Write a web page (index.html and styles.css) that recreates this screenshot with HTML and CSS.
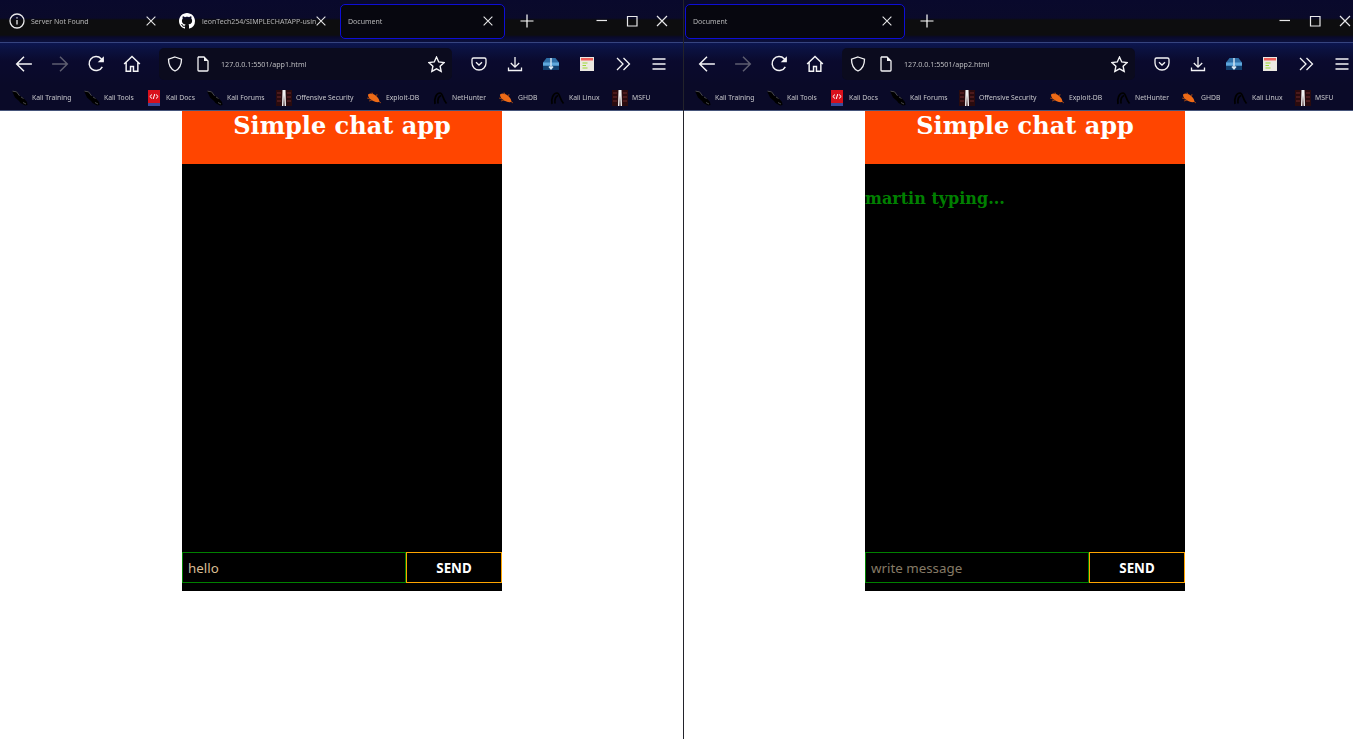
FILE: index.html
```html
<!DOCTYPE html>
<html lang="en">
<head>
    <meta charset="UTF-8">
    <meta name="viewport" content="width=device-width, initial-scale=1.0">
    <title>Simple chat app</title>
    <link rel="stylesheet" href="styles.css">
</head>
<body>

<!-- shared icons -->
<svg class="sprite" width="0" height="0">
  <symbol id="i-close" viewBox="0 0 16 16"><path d="M3 3l10 10M13 3L3 13"/></symbol>
  <symbol id="i-plus" viewBox="0 0 16 16"><path d="M8 1.500v13M1.500 8h13"/></symbol>
  <symbol id="i-min" viewBox="0 0 16 16"><path d="M2.500 7.500h10.500"/></symbol>
  <symbol id="i-max" viewBox="0 0 16 16"><path d="M3.500 3.500h9.500v9.500h-9.500z"/></symbol>
  <symbol id="i-info" viewBox="0 0 16 16"><circle cx="8" cy="8" r="7"/><path d="M8 7v4.500M8 4.200v1.300"/></symbol>
  <symbol id="i-back" viewBox="0 0 16 16"><path d="M15 8H1.500M8 1.500L1.500 8 8 14.500"/></symbol>
  <symbol id="i-forward" viewBox="0 0 16 16"><path d="M1 8h13.500M8 1.500L14.500 8 8 14.500"/></symbol>
  <symbol id="i-reload" viewBox="0 0 16 16"><path d="M13.600 10.500A6.200 6.200 0 1 1 12.600 3.300L14.500 5"/><path class="fill" d="M15 1v5.500H9.500z"/></symbol>
  <symbol id="i-home" viewBox="0 0 16 16"><path d="M1 8l7-6.700L15 8M2.800 6.500v8h3.900v-4.300h2.600v4.300h3.900v-8"/></symbol>
  <symbol id="i-shield" viewBox="0 0 16 16"><path d="M8 1l6.500 2.200c0 6-1.500 9.500-6.500 11.800C3 12.700 1.500 9.200 1.500 3.200z"/></symbol>
  <symbol id="i-page" viewBox="0 0 16 16"><path d="M3 1h6l4 4v9.200a.8.8 0 0 1-.8.800H3.800a.8.8 0 0 1-.8-.8V1.800A.8.8 0 0 1 3.800 1z"/><path class="fill" d="M9 1l4 4H9z"/></symbol>
  <symbol id="i-star" viewBox="0 0 16 16"><path d="M8 1l2.100 4.600 5 .6-3.700 3.400 1 4.900L8 12.100l-4.400 2.400 1-4.900L.9 6.200l5-.6z"/></symbol>
  <symbol id="i-pocket" viewBox="0 0 16 16"><path d="M2.500 2h11A1.500 1.500 0 0 1 15 3.500V7A7 7 0 0 1 1 7V3.500A1.500 1.500 0 0 1 2.500 2z"/><path d="M5 6.200l3 2.800 3-2.800"/></symbol>
  <symbol id="i-download" viewBox="0 0 16 16"><path d="M8 1v10M3.800 7L8 11.200 12.200 7M1.500 11.500v3h13v-3"/></symbol>
  <symbol id="i-more" viewBox="0 0 16 16"><path d="M2 2l6 6-6 6M8.500 2l6 6-6 6"/></symbol>
  <symbol id="i-menu" viewBox="0 0 16 16"><path d="M1.500 3h13M1.500 8h13M1.500 13h13"/></symbol>
  <symbol id="i-github" viewBox="0 0 16 16"><path class="fill" d="M8 0C3.580 0 0 3.580 0 8c0 3.540 2.290 6.530 5.470 7.590.4.070.55-.17.55-.38 0-.19-.01-.82-.01-1.490-2.010.37-2.530-.49-2.690-.94-.09-.23-.48-.94-.82-1.130-.28-.15-.68-.52-.01-.53.63-.01 1.080.58 1.230.82.720 1.210 1.870.87 2.330.66.070-.52.28-.87.510-1.070-1.780-.2-3.640-.89-3.640-3.950 0-.87.310-1.590.82-2.150-.08-.2-.36-1.020.08-2.120 0 0 .67-.21 2.200.82.640-.18 1.320-.27 2-.27s1.360.09 2 .27c1.530-1.040 2.200-.82 2.200-.82.440 1.100.16 1.920.08 2.120.51.560.82 1.270.82 2.150 0 3.070-1.870 3.750-3.650 3.950.29.250.54.730.54 1.480 0 1.070-.01 1.930-.01 2.200 0 .21.150.46.550.38A8.010 8.010 0 0 0 16 8c0-4.420-3.580-8-8-8z"/></symbol>
  <symbol id="i-toolbox" viewBox="0 0 16 16"><path d="M0 6.500L3.500 2h9L16 6.500V14H0z" fill="#2e6ea6" stroke="none"/><path d="M0 6.500h16v3H0z" fill="#5fa8dc" stroke="none"/><path d="M0 10h16v4H0z" fill="#123f6e" stroke="none"/><path d="M8 2v11M6 10.500L8 13l2-2.500" stroke="#dbeaf5" stroke-width="1.400"/></symbol>
  <symbol id="i-note" viewBox="0 0 16 16"><path d="M1 1h14v14H1z" fill="#ece9e2" stroke="none"/><path d="M2 2h12v2.500H2z" fill="#f0605a" stroke="none"/><path d="M3.500 7h5M3.500 9.500h3.500M3.500 12h5" stroke="#9bd832" stroke-width="1.100"/></symbol>
  <symbol id="i-dragon" viewBox="0 0 16 16"><path d="M0 1l4.500.5 3.500 4.500 3 1.500 4 4.500.5 3-2.500.5-4.500-2.500-1.500-2-4-3.500z" fill="#000" stroke="none"/><path d="M.5 1.200l4 .6 3 4M9 7l2.500 1.500M11 12.500l3 1.500" stroke="#77777c" stroke-width=".6"/></symbol>
  <symbol id="i-docs" viewBox="0 0 16 16"><path d="M2 0h12v13H2z" fill="#d8101c" stroke="none"/><path d="M2 13h12v3H2z" fill="#3a4a9a" stroke="none"/><path d="M6 4.500L3.800 6.500 6 8.500M10 4.500l2.200 2-2.200 2M8.800 4l-1.600 5" stroke="#fff" stroke-width="1"/></symbol>
  <symbol id="i-offsec" viewBox="0 0 16 16"><path d="M0 0h16v16H0z" fill="#2a0b0e" stroke="none"/><path d="M1 3h4M1 7h4M1 11h4M11 3h4M11 7h4M11 11h4" stroke="#6e2a2a" stroke-width="1.200"/><path d="M6.500 0h3l.5 16H8.600L8 5l-.6 11H6z" fill="#f2f2f2" stroke="none"/></symbol>
  <symbol id="i-bug" viewBox="0 0 16 16"><path d="M2 4.500c3-2 7-.5 10 3.500 1 1.500 1.500 3 1.500 4-3 .5-7-.5-9.500-3C2.500 7.500 2 6 2 4.500z" fill="#ee6a16" stroke="none"/><path d="M1 8l3 1M3 11l3-1M6 2.500l1 2M11 4l-.5 2.500M15 13l-2-1.500" stroke="#b04a10" stroke-width=".8"/></symbol>
  <symbol id="i-net" viewBox="0 0 16 16"><path d="M3 14c-1-5 1-11 5-11 3 0 2.500 6 6.500 10.500M9 5.500c-2.500 1-3.500 4-3 8" stroke="#000" stroke-width="1.700"/></symbol>
</svg>

<div class="desktop">

  <div class="window">
    <div class="tabstrip">
      <div class="tab">
        <svg class="tab-icon"><use href="#i-info"/></svg>
        <span class="tab-title">Server Not Found</span>
        <svg class="tab-close"><use href="#i-close"/></svg>
      </div>
      <div class="tab">
        <svg class="tab-icon"><use href="#i-github"/></svg>
        <span class="tab-title">leonTech254/SIMPLECHATAPP-usin</span>
        <svg class="tab-close"><use href="#i-close"/></svg>
      </div>
      <div class="tab tab--active">
        <span class="tab-title">Document</span>
        <svg class="tab-close"><use href="#i-close"/></svg>
      </div>
      <svg class="new-tab"><use href="#i-plus"/></svg>
      <div class="win-controls">
        <svg class="win-btn"><use href="#i-min"/></svg>
        <svg class="win-btn"><use href="#i-max"/></svg>
        <svg class="win-btn"><use href="#i-close"/></svg>
      </div>
    </div>
    <div class="navbar">
      <svg class="nav-btn"><use href="#i-back"/></svg>
      <svg class="nav-btn nav-btn--off"><use href="#i-forward"/></svg>
      <svg class="nav-btn"><use href="#i-reload"/></svg>
      <svg class="nav-btn"><use href="#i-home"/></svg>
      <div class="urlbar">
        <svg class="url-icon"><use href="#i-shield"/></svg>
        <svg class="url-icon"><use href="#i-page"/></svg>
        <span class="url-text">127.0.0.1:5501/app1.html</span>
        <svg class="url-star"><use href="#i-star"/></svg>
      </div>
      <div class="nav-right">
        <svg class="nav-btn"><use href="#i-pocket"/></svg>
        <svg class="nav-btn"><use href="#i-download"/></svg>
        <svg class="nav-btn"><use href="#i-toolbox"/></svg>
        <svg class="nav-btn"><use href="#i-note"/></svg>
        <svg class="nav-btn"><use href="#i-more"/></svg>
        <svg class="nav-btn"><use href="#i-menu"/></svg>
      </div>
    </div>
    <div class="bookmarks">
      <a class="bookmark"><svg><use href="#i-dragon"/></svg><span>Kali Training</span></a>
      <a class="bookmark"><svg><use href="#i-dragon"/></svg><span>Kali Tools</span></a>
      <a class="bookmark"><svg><use href="#i-docs"/></svg><span>Kali Docs</span></a>
      <a class="bookmark"><svg><use href="#i-dragon"/></svg><span>Kali Forums</span></a>
      <a class="bookmark"><svg><use href="#i-offsec"/></svg><span>Offensive Security</span></a>
      <a class="bookmark"><svg><use href="#i-bug"/></svg><span>Exploit-DB</span></a>
      <a class="bookmark"><svg><use href="#i-net"/></svg><span>NetHunter</span></a>
      <a class="bookmark"><svg><use href="#i-bug"/></svg><span>GHDB</span></a>
      <a class="bookmark"><svg><use href="#i-net"/></svg><span>Kali Linux</span></a>
      <a class="bookmark"><svg><use href="#i-offsec"/></svg><span>MSFU</span></a>
    </div>
    <div class="page">
      <div class="chat">
        <h1 class="chat__title">Simple chat app</h1>
        <div class="chat__messages"></div>
        <form class="chat__form">
          <input class="chat__input" type="text" value="hello" placeholder="write message">
          <button class="chat__send" type="button">SEND</button>
        </form>
      </div>
    </div>
  </div>

  <div class="window window--right">
    <div class="tabstrip">
      <div class="tab tab--active tab--only">
        <span class="tab-title">Document</span>
        <svg class="tab-close"><use href="#i-close"/></svg>
      </div>
      <svg class="new-tab"><use href="#i-plus"/></svg>
      <div class="win-controls">
        <svg class="win-btn"><use href="#i-min"/></svg>
        <svg class="win-btn"><use href="#i-max"/></svg>
        <svg class="win-btn"><use href="#i-close"/></svg>
      </div>
    </div>
    <div class="navbar">
      <svg class="nav-btn"><use href="#i-back"/></svg>
      <svg class="nav-btn nav-btn--off"><use href="#i-forward"/></svg>
      <svg class="nav-btn"><use href="#i-reload"/></svg>
      <svg class="nav-btn"><use href="#i-home"/></svg>
      <div class="urlbar">
        <svg class="url-icon"><use href="#i-shield"/></svg>
        <svg class="url-icon"><use href="#i-page"/></svg>
        <span class="url-text">127.0.0.1:5501/app2.html</span>
        <svg class="url-star"><use href="#i-star"/></svg>
      </div>
      <div class="nav-right">
        <svg class="nav-btn"><use href="#i-pocket"/></svg>
        <svg class="nav-btn"><use href="#i-download"/></svg>
        <svg class="nav-btn"><use href="#i-toolbox"/></svg>
        <svg class="nav-btn"><use href="#i-note"/></svg>
        <svg class="nav-btn"><use href="#i-more"/></svg>
        <svg class="nav-btn"><use href="#i-menu"/></svg>
      </div>
    </div>
    <div class="bookmarks">
      <a class="bookmark"><svg><use href="#i-dragon"/></svg><span>Kali Training</span></a>
      <a class="bookmark"><svg><use href="#i-dragon"/></svg><span>Kali Tools</span></a>
      <a class="bookmark"><svg><use href="#i-docs"/></svg><span>Kali Docs</span></a>
      <a class="bookmark"><svg><use href="#i-dragon"/></svg><span>Kali Forums</span></a>
      <a class="bookmark"><svg><use href="#i-offsec"/></svg><span>Offensive Security</span></a>
      <a class="bookmark"><svg><use href="#i-bug"/></svg><span>Exploit-DB</span></a>
      <a class="bookmark"><svg><use href="#i-net"/></svg><span>NetHunter</span></a>
      <a class="bookmark"><svg><use href="#i-bug"/></svg><span>GHDB</span></a>
      <a class="bookmark"><svg><use href="#i-net"/></svg><span>Kali Linux</span></a>
      <a class="bookmark"><svg><use href="#i-offsec"/></svg><span>MSFU</span></a>
    </div>
    <div class="page">
      <div class="chat">
        <h1 class="chat__title">Simple chat app</h1>
        <div class="chat__messages">
          <p class="chat__typing">martin typing...</p>
        </div>
        <form class="chat__form">
          <input class="chat__input" type="text" placeholder="write message">
          <button class="chat__send" type="button">SEND</button>
        </form>
      </div>
    </div>
  </div>

</div>

</body>
</html>
```

FILE: styles.css
```css
*,
*::before,
*::after {
  box-sizing: border-box;
}

html,
body {
  margin: 0;
  height: 100%;
  overflow: hidden;
}

body {
  background: #fff;
  font-family: "Noto Sans", sans-serif;
}

.sprite {
  position: absolute;
}

svg {
  fill: none;
  stroke: currentColor;
  stroke-width: 1.300;
  flex: none;
}

symbol .fill {
  fill: currentColor;
  stroke: none;
}

.desktop {
  display: flex;
  height: 739px;
  width: 1353px;
  overflow: hidden;
}

.window {
  flex: none;
  width: 683px;
  height: 739px;
  display: flex;
  flex-direction: column;
}

.window--right {
  border-left: 1px solid #23232b;
}

/* grey text edges, the browser in the shot doesn't use subpixel text */
.tab-title,
.url-text,
.bookmark span {
  will-change: transform;
}

/* ---- tab strip ---- */

.tabstrip {
  height: 42px;
  display: flex;
  align-items: center;
  color: #fff;
  background: linear-gradient(to bottom,
    #09092c 0,
    #0a0a2a 18px,
    #0d0d0f 20px,
    #0d0d0f 35px,
    #09092a 37px,
    #0b0f3a 41px);
}

.tab {
  flex: none;
  width: 170px;
  height: 35px;
  padding: 0 10px;
  display: flex;
  align-items: center;
  color: #b4b4b6;
  font-size: 7px;
}

.tab-icon {
  width: 16px;
  height: 16px;
  margin-left: -1px;
  margin-right: 6px;
  color: #e8e8ea;
}

.tab:nth-child(2) .tab-icon {
  margin-right: 7px;
  color: #fff;
}

.tab-title {
  flex: 1;
  min-width: 0;
  white-space: nowrap;
}

.tab-close {
  width: 14px;
  height: 14px;
  margin-right: 2px;
  color: #e4e4e6;
}

.tab--active {
  width: 165px;
  background: #07070f;
  border: 1.500px solid #0d0dd6;
  border-radius: 5px;
  padding: 0 8px 0 7px;
}

.tab--active .tab-close {
  margin-right: 1px;
}

.tab--only {
  width: 220px;
  margin-left: 1px;
}

.tab--only .tab-close {
  margin-right: 2px;
}

.new-tab {
  width: 16px;
  height: 16px;
  margin-left: 14px;
  stroke-width: 1.200;
}

.win-controls {
  margin-left: auto;
  padding-right: 13px;
  display: flex;
  gap: 14px;
  color: #e8e8ea;
}

.win-btn {
  width: 16px;
  height: 16px;
  stroke-width: 1.200;
}

/* ---- toolbar ---- */

.navbar {
  height: 43px;
  padding-left: 6px;
  display: flex;
  align-items: center;
  color: #f4f4f6;
  border-top: 1px solid #36447f;
  background: linear-gradient(to bottom, #0c1650 0, #0b113f 7px, #0a0a2e 18px, #0a0a28 100%);
}

.window--right .navbar {
  padding-left: 5px;
}

.nav-btn {
  width: 16px;
  height: 16px;
}

.navbar > .nav-btn {
  width: 18px;
  height: 18px;
  margin: 0 9px;
}

.nav-btn--off {
  color: #5e5e70;
}

.urlbar {
  flex: none;
  width: 293px;
  height: 32px;
  margin-left: 9px;
  padding: 0 7px 0 8px;
  display: flex;
  align-items: center;
  background: #0b0b1e;
  border-radius: 5px;
}

.url-icon {
  width: 16px;
  height: 16px;
  margin-right: 12px;
}

.url-icon + .url-icon {
  margin-right: 10px;
}

.url-text {
  flex: 1;
  font-size: 7.150px;
  color: #bdbdc0;
}

.url-star {
  width: 17px;
  height: 17px;
}

.nav-right {
  flex: none;
  display: flex;
  align-items: center;
  gap: 20px;
  margin-left: 19px;
}

/* ---- bookmarks ---- */

.bookmarks {
  height: 26px;
  padding-left: 12px;
  display: flex;
  align-items: center;
  gap: 12.200px;
  background: #0a0a28;
  border-bottom: 1px solid #46557a;
  overflow: hidden;
}

.window--right .bookmarks {
  padding-left: 11px;
}

.bookmark {
  display: flex;
  align-items: center;
  gap: 4px;
  color: #c8c8cc;
  font-size: 6.800px;
  white-space: nowrap;
}

.bookmark svg {
  width: 16px;
  height: 16px;
}

/* ---- chat page ---- */

.page {
  flex: 1;
  background: #fff;
}

.chat {
  width: 320px;
  height: 480px;
  margin-left: 182px;
  display: flex;
  flex-direction: column;
  background: #000;
}

.window--right .chat {
  margin-left: 181px;
}

.chat__title {
  height: 53px;
  margin: 0;
  background: #ff4500;
  color: #fff;
  font-family: "DejaVu Serif", serif;
  font-size: 24px;
  font-weight: 700;
  line-height: 29px;
  text-align: center;
}

.chat__messages {
  flex: 1;
}

.chat__typing {
  margin: 25px 0 0;
  color: #008000;
  font-family: "DejaVu Serif", serif;
  font-size: 16px;
  font-weight: 700;
  line-height: 20px;
}

.chat__form {
  height: 39px;
  display: flex;
  align-items: flex-start;
}

.chat__input {
  width: 224px;
  height: 31px;
  padding: 0 5px;
  background: #000;
  border: 1px solid #008000;
  color: #d8bd94;
  font-family: "Noto Sans", sans-serif;
  font-size: 13.333px;
  outline: none;
}

.chat__input::placeholder {
  color: #857a66;
  opacity: 1;
}

.chat__send {
  width: 96px;
  height: 31px;
  padding: 0;
  background: #000;
  border: 1px solid #ffa500;
  color: #fff;
  font-family: "Noto Sans", sans-serif;
  font-size: 13.333px;
  font-weight: 700;
}
```
